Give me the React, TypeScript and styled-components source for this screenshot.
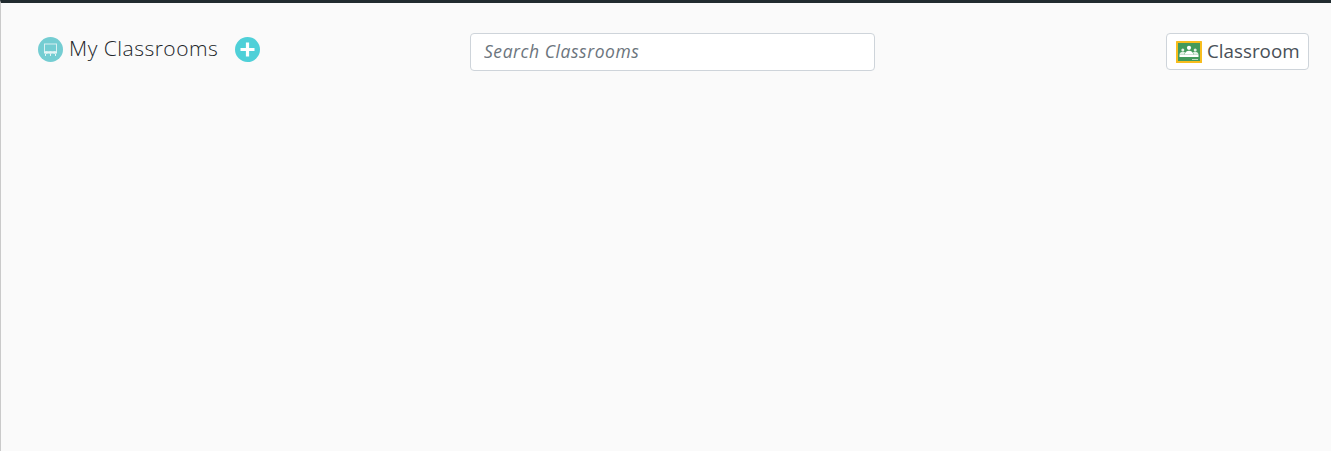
import React from 'react'
import styled, { createGlobalStyle } from 'styled-components'

const GlobalStyle = createGlobalStyle`
  html, body {
    margin: 0;
    padding: 0;
    height: 100%;
    background: #fafafa;
  }
  body {
    font-family: "Open Sans", Lato, sans-serif;
  }
`

const Page = styled.div`
  box-sizing: border-box;
  height: 451px;
  overflow: hidden;
  background: #fafafa;
  border-top: 3px solid #212b30;
  border-left: 1px solid #cacaca;
`

const Toolbar = styled.header`
  display: grid;
  grid-template-columns: 432px 405px 1fr;
  align-items: start;
  padding: 30px 22px 0 37px;
`

const TitleGroup = styled.div`
  display: flex;
  align-items: center;
  height: 32px;
`

const Title = styled.h1`
  margin: 0 17px 0 6px;
  font-size: 21px;
  font-weight: 300;
  letter-spacing: 0.5px;
  line-height: 30px;
  color: #212529;
  white-space: nowrap;
  transform: translateY(-1px);
`

const RoundIcon = styled.svg`
  display: block;
  flex: none;
  width: 25px;
  height: 25px;
`

const SearchInput = styled.input`
  box-sizing: border-box;
  width: 405px;
  height: 38px;
  padding: 0 13px 2px;
  background: #fff;
  border: 1px solid #ced4da;
  border-radius: 4px;
  font-family: inherit;
  font-size: 17.5px;
  font-style: italic;
  letter-spacing: 0.55px;
  outline: none;

  &::placeholder {
    color: #6c757d;
    opacity: 1;
  }
`

const ClassroomButton = styled.button`
  justify-self: end;
  box-sizing: border-box;
  display: flex;
  align-items: center;
  gap: 5px;
  width: 143px;
  height: 37px;
  padding: 0 8px 2px 9px;
  background: #fff;
  border: 1px solid #ced4da;
  border-radius: 4px;
  font-family: inherit;
  font-size: 18.8px;
  color: #495057;
  white-space: nowrap;
`

const BoardIcon = styled.svg`
  display: block;
  flex: none;
  width: 26px;
  height: 22px;
  margin-top: 2px;
`

const App = () => (
  <>
    <GlobalStyle />
    <Page>
      <Toolbar>
        <TitleGroup>
          <RoundIcon viewBox="0 0 25 25">
            <circle cx="12.5" cy="12.5" r="12.5" fill="#74cdd2" />
            <rect x="6.5" y="7" width="12" height="8" fill="none" stroke="#d8f0f2" strokeWidth="1" />
            <rect x="6" y="14.5" width="13" height="2" fill="#e4f5f6" />
            <circle cx="8.5" cy="15.5" r="1.3" fill="#e4f5f6" />
            <circle cx="12.5" cy="15.5" r="1.3" fill="#e4f5f6" />
            <circle cx="16.5" cy="15.5" r="1.3" fill="#e4f5f6" />
            <path d="M7.5 17v2M12.5 17v2M17.500 17v2" stroke="#e4f5f6" strokeWidth="1" />
          </RoundIcon>
          <Title>My Classrooms</Title>
          <RoundIcon viewBox="0 0 25 25">
            <circle cx="12.5" cy="12.5" r="12.5" fill="#4fd0d8" />
            <path d="M12.5 5.5v14M5.5 12.5h14" stroke="#fff" strokeWidth="3.2" />
          </RoundIcon>
        </TitleGroup>
        <SearchInput placeholder="Search Classrooms" />
        <ClassroomButton>
          <BoardIcon viewBox="0 0 26 22">
            <rect width="26" height="22" rx="0.5" fill="#f7bd1e" />
            <rect x="2" y="2" width="22" height="18" fill="#439a5b" />
            <circle cx="13" cy="6.8" r="2.1" fill="#fff" />
            <circle cx="6.8" cy="9" r="1.5" fill="#e3f0e5" />
            <circle cx="19.2" cy="9" r="1.5" fill="#e3f0e5" />
            <path d="M8.800 13.500c0-2.300 2-3.800 4.200-3.800s4.200 1.500 4.200 3.800z" fill="#fff" />
            <path d="M3.500 13.500c0-1.500 1.500-2.800 3.300-2.800 1 0 1.700.3 2.300.8-.5.600-.7 1.200-.8 2zM22.500 13.500c0-1.500-1.500-2.800-3.300-2.800-1 0-1.700.3-2.300.8.500.600.700 1.200.8 2z" fill="#e3f0e5" />
            <rect x="3.500" y="13.500" width="19" height="2.500" fill="#fff" />
            <rect x="16" y="18" width="6" height="1" fill="#bcd9c3" />
          </BoardIcon>
          Classroom
        </ClassroomButton>
      </Toolbar>
    </Page>
  </>
)

export default App
